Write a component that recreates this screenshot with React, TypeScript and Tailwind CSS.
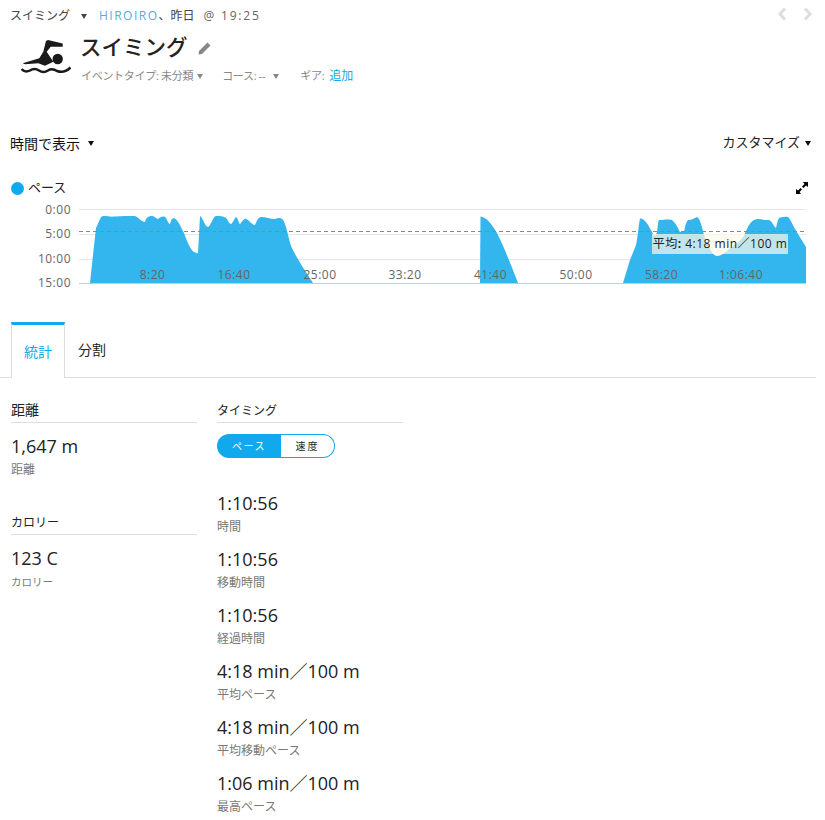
import React from 'react';

const font = 'font-["Open_Sans","Noto_Sans_CJK_JP",sans-serif]';

const areas = [
  'M90 283 L93 255 L96 228 L101 217 L103 216 C108 216 110 217 115 216.5 C122 215.5 128 216 135 216 C139 218 142 222 145 222 C146 218 148 216 152 216 C155 216 156 219 158 219 C160 217 163 216 165 217 C167 218 168 224 170 224 C171 220 172 218 174 218 C178 220 181 227 184 233 C187 241 190 249 194 252 L198 253.5 L200 216 C203 218 205 227 208 227 C211 226 213 216 216 216 C220 216 223 216 226 218 C228 220 229 224 231 224 C233 223 235 217 236 217 C238 218 239 224 240 224 C242 222 244 218 246 219 C249 220 252 225 255 225 C257 221 258 217 261 217 C266 217 270 219 275 219 C278 218 281 217 283 220 C286 224 288 236 291 246 C294 253 298 259 302 266 L313 283 Z',
  'M480 283 L480.5 216.5 C486 217 491 223 497 233 C503 245 510 262 518 283 Z',
  'M623 283 L630 260 L636 245 C638 236 639 222 640 218.5 C644 218 648 224 652 232 C654 236 655 238 657 232 C658 226 658 221 659 220 C664 220 668 219 672 220 C675 222 678 228 680 232 L684 232 C685 226 686 222 688 220 C692 220 694 218 697 217 C700 218 702 227 704 235 C707 243 712 256 717 256 C722 256 728 250 733 246 C737 243 741 240 744 236 C747 228 750 222 754 220 C758 218 763 220 768 220 C771 219 773 225 776 228 C777 224 778 218 780 217.5 C783 217 786 216.5 788 217 C791 220 794 228 798 234 L806 247 L806 283 Z',
];

const xLabels = [
  { x: 152.5, t: '8:20' },
  { x: 234, t: '16:40' },
  { x: 320, t: '25:00' },
  { x: 405, t: '33:20' },
  { x: 490.5, t: '41:40' },
  { x: 576, t: '50:00' },
  { x: 661.5, t: '58:20' },
  { x: 741, t: '1:06:40' },
];

const yLabels = [
  { y: 214, t: '0:00' },
  { y: 238, t: '5:00' },
  { y: 263, t: '10:00' },
  { y: 287, t: '15:00' },
];

function Caret({ color = 'border-t-[#666]' }: { color?: string }) {
  return <span className={`inline-block w-0 h-0 border-x-[3.5px] border-x-transparent border-t-[5px] ${color}`}></span>;
}

function Chart() {
  return (
    <div className="relative h-[90px]">
      <svg width="816" height="90" viewBox="0 200 816 90" className="block">
        {[209.5, 234.5, 259.5].map((y) => (
          <line key={y} x1="79" x2="806" y1={y} y2={y} stroke="#e6e6e6" />
        ))}
        {areas.map((d, i) => (
          <path key={i} d={d} fill="#33b5ee" />
        ))}
        <line x1="79" x2="806" y1="283.5" y2="283.5" stroke="#c0d0e0" />
        <line x1="79" x2="806" y1="231.5" y2="231.5" stroke="#888" strokeDasharray="4 3" />
        {yLabels.map((l) => (
          <text key={l.t} x="71" y={l.y} textAnchor="end" fontSize="12" fill="#666" letterSpacing="0.5" fontFamily="Open Sans">
            {l.t}
          </text>
        ))}
        {xLabels.map((l) => (
          <text key={l.t} x={l.x} y="279" textAnchor="middle" fontSize="12" fill="#666" letterSpacing="0.5" fontFamily="Open Sans">
            {l.t}
          </text>
        ))}
      </svg>
      <div className="absolute left-[652px] top-[34px] w-[136px] h-[20px] bg-[#fffaeb]/70 text-[12px] leading-[20px] text-[#222] text-center tracking-[0.5px] whitespace-nowrap">
        平均<span className="font-bold">:</span> 4:18 min／100 m
      </div>
    </div>
  );
}

function Metric({ value, label, labelClass = 'text-[12px]', className = '' }: { value: string; label: string; labelClass?: string; className?: string }) {
  return (
    <div className={`h-[56.2px] pt-[4.500px] ${className}`}>
      <div className="text-[18px] leading-[24px] text-[#222]">{value}</div>
      <div className={`mt-[2px] leading-[20px] text-[#777] ${labelClass}`}>{label}</div>
    </div>
  );
}

function SectionHead({ children, className = 'text-[12px] pt-[1px]' }: { children: React.ReactNode; className?: string }) {
  return <div className={`h-[22px] border-b border-[#ddd] leading-[18px] text-[#222] ${className}`}>{children}</div>;
}

export default function App() {
  return (
    <div className={`${font} w-[816px] h-[820px] overflow-hidden bg-white`}>
      <div className="flex items-center h-[32px] pl-[10px] pr-[3px] text-[12px] text-[#444]">
        <span>スイミング</span>
        <span className="ml-[11px] flex"><Caret color="border-t-[#444]" /></span>
        <span className="ml-[12px] tracking-[1.5px] text-[#5aa9e0]">HIROIRO</span>
        <span>、昨日</span>
        <span className="ml-[9px] tracking-[1.8px] text-[#666]">@ 19:25</span>
        <div className="ml-auto flex gap-[16px] mb-[5px]">
          <svg width="10" height="14" viewBox="0 0 10 14"><path d="M8 1.500 3 7l5 5.500" fill="none" stroke="#ddd" strokeWidth="3" /></svg>
          <svg width="10" height="14" viewBox="0 0 10 14"><path d="m2 1.500 5 5.500-5 5.500" fill="none" stroke="#ddd" strokeWidth="3" /></svg>
        </div>
      </div>

      <div className="flex pl-[21px]">
        <svg width="50" height="36" viewBox="21 40 50 36" className="mt-[8px] shrink-0">
          <path d="M62.700 43.500 L48 40 L46 41 L43.300 51.700 L39.300 58.300 L22.700 63.300 L25 64.300 L38.300 63.300 L45 65.700 L53.300 61.700 L50 56.700 L46.700 51.700 L50.700 46.700 L62.700 46.700 Z" fill="#1a1a1a" />
          <circle cx="57.700" cy="59" r="5.200" fill="#1a1a1a" />
          <path d="M21.500 69 C24 72 27 72 30 70.500 C33 68.500 36 68.500 39 70.500 C42 72.500 45 72.500 48 70.500 C51 68.500 54 69 57 71 C61 72.500 66 72 70.500 67.500" fill="none" stroke="#1a1a1a" strokeWidth="2.500" />
        </svg>
        <div className="ml-[10px]">
          <div className="flex items-center h-[30px]">
            <span className="text-[21.500px] leading-[30px] font-medium text-[#222] ml-[-1px]">スイミング</span>
            <svg width="13" height="13" viewBox="0 0 13 13" className="ml-[10px] mt-[2px]">
              <path d="M9.500 0.500 L12.500 3.500 L4 12 L0.500 12.500 L1 9 Z" fill="#888" />
            </svg>
          </div>
          <div className="flex items-center h-[28px] text-[11px] text-[#888] tracking-[-0.3px]">
            <span>イベントタイプ: 未分類</span>
            <span className="ml-[4px] flex"><Caret color="border-t-[#888]" /></span>
            <span className="ml-[19px]">コース: --</span>
            <span className="ml-[8px] flex"><Caret color="border-t-[#888]" /></span>
            <span className="ml-[21px]">ギア:</span>
            <span className="ml-[5px] text-[12px] tracking-normal text-[#11a9ed]">追加</span>
          </div>
        </div>
      </div>

      <div className="flex items-center justify-between h-[24px] mt-[41px] pl-[10px] pr-[5px] text-[14px] text-[#111]">
        <div className="flex items-center gap-[8px]">
          <span>時間で表示</span>
          <Caret color="border-t-[#111]" />
        </div>
        <div className="flex items-center gap-[5px] text-[13px] text-[#222]">
          <span>カスタマイズ</span>
          <Caret color="border-t-[#111]" />
        </div>
      </div>

      <div className="relative flex items-center h-[24px] mt-[21px] pl-[11px] text-[13px] text-[#222]">
        <span className="w-[13px] h-[13px] rounded-full bg-[#11a9ed]"></span>
        <span className="ml-[4px]">ペース</span>
        <svg width="14" height="14" viewBox="0 0 14 14" className="absolute left-[795px] top-[5px]">
          <path d="M8 1 H13 V6 L11 4.500 L8.500 7 L7 5.500 L9.500 3 Z" fill="#000" />
          <path d="M1 8 L1 13 H6 L4.500 11 L7 8.500 L5.500 7 L3 9.500 Z" fill="#000" />
        </svg>
      </div>

      <Chart />

      <div className="flex h-[56px] mt-[32px] pl-[11px] border-b border-[#ddd] text-[14px]">
        <div className="w-[54px] h-[56px] bg-white border-x border-[#ddd] border-t-[3px] border-t-[#11a9ed] text-[#11a9ed] flex items-center justify-center">統計</div>
        <div className="w-[54px] flex items-center justify-center text-[#222]">分割</div>
      </div>

      <div className="flex pl-[11px] pt-[23px] gap-[20px]">
        <div className="w-[186px]">
          <SectionHead className="text-[14px]">距離</SectionHead>
          <Metric className="mt-[6px]" value="1,647 m" label="距離" />
          <div className="mt-[28px]">
            <SectionHead>カロリー</SectionHead>
            <Metric className="mt-[6px]" value="123 C" label="カロリー" labelClass="text-[10.500px]" />
          </div>
        </div>
        <div className="w-[186px]">
          <SectionHead>タイミング</SectionHead>
          <div className="flex w-[118px] h-[24px] mt-[11px] mb-[28px] text-[10px] tracking-[1.5px] rounded-full">
            <div className="w-[64px] flex items-center justify-center bg-[#11a9ed] text-white rounded-l-full">ペース</div>
            <div className="flex-1 flex items-center justify-center border border-l-0 border-[#11a9ed] rounded-r-full text-[#222] tracking-[2px]">速度</div>
          </div>
          <Metric value="1:10:56" label="時間" />
          <Metric value="1:10:56" label="移動時間" />
          <Metric value="1:10:56" label="経過時間" />
          <Metric value="4:18 min／100 m" label="平均ペース" />
          <Metric value="4:18 min／100 m" label="平均移動ペース" />
          <Metric value="1:06 min／100 m" label="最高ペース" />
        </div>
      </div>
    </div>
  );
}
